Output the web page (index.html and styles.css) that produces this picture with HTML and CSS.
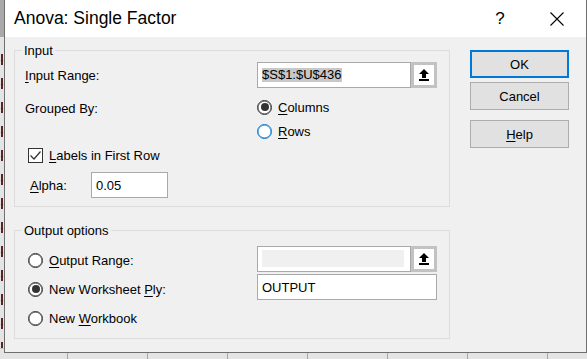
FILE: index.html
```html
<!DOCTYPE html>
<html lang="en">
<head>
    <meta charset="UTF-8">
    <title>Anova: Single Factor</title>
    <link rel="stylesheet" href="styles.css">
</head>
<body>
    <div class="dialog">
        <div class="title-bar">
            <span class="title">Anova: Single Factor</span>
            <div class="title-actions">
                <span class="help-glyph">?</span>
                <svg class="close-glyph" width="14" height="14" viewBox="0 0 14 14">
                    <path d="M0.5 0.5 13.5 13.5 M13.5 0.5 0.5 13.5" stroke="#000" stroke-width="1.1" fill="none"/>
                </svg>
            </div>
        </div>

        <div class="dialog-body">
            <div class="groups">
                <fieldset class="group">
                    <legend>Input</legend>
                    <div class="group-body">
                        <div class="field-row">
                            <span class="field-label"><u>I</u>nput Range:</span>
                            <div class="range-input">
                                <div class="text-box range-box"><span class="selected">$S$1:$U$436</span></div>
                                <div class="pick-btn">
                                    <svg width="10" height="12" viewBox="0 0 10 12">
                                        <path d="M5 0 10 5H7v4H3V5H0z" fill="#000"/>
                                        <rect y="10" width="10" height="2" fill="#000"/>
                                    </svg>
                                </div>
                            </div>
                        </div>

                        <div class="grouped-row">
                            <span class="field-label grouped-label">Grouped By:</span>
                            <div class="radio-list">
                                <div class="radio"><span class="radio-mark checked"></span><span><u>C</u>olumns</span></div>
                                <div class="radio"><span class="radio-mark hover"></span><span><u>R</u>ows</span></div>
                            </div>
                        </div>

                        <div class="check-row">
                            <svg class="check-box" width="15" height="15" viewBox="0 0 15 15">
                                <rect x="0.5" y="0.5" width="14" height="14" fill="#fff" stroke="#333"/>
                                <path d="M2.5 7.5 6 11 12.5 3.5" stroke="#333" stroke-width="1.2" fill="none"/>
                            </svg>
                            <span><u>L</u>abels in First Row</span>
                        </div>

                        <div class="alpha-row">
                            <span class="alpha-label"><u>A</u>lpha:</span>
                            <div class="text-box alpha-box">0.05</div>
                        </div>
                    </div>
                </fieldset>

                <fieldset class="group group-output">
                    <legend>Output options</legend>
                    <div class="output-body">
                        <div class="radio-stack">
                            <div class="radio"><span class="radio-mark"></span><span><u>O</u>utput Range:</span></div>
                            <div class="radio"><span class="radio-mark checked"></span><span>New Worksheet <u>P</u>ly:</span></div>
                            <div class="radio"><span class="radio-mark"></span><span>New <u>W</u>orkbook</span></div>
                        </div>
                        <div class="box-stack">
                            <div class="range-input">
                                <div class="text-box range-box disabled-box"><span class="disabled-fill"></span></div>
                                <div class="pick-btn">
                                    <svg width="10" height="12" viewBox="0 0 10 12">
                                        <path d="M5 0 10 5H7v4H3V5H0z" fill="#000"/>
                                        <rect y="10" width="10" height="2" fill="#000"/>
                                    </svg>
                                </div>
                            </div>
                            <div class="text-box ply-box">OUTPUT</div>
                        </div>
                    </div>
                </fieldset>
            </div>

            <div class="button-column">
                <button class="btn btn-default">OK</button>
                <button class="btn">Cancel</button>
                <button class="btn btn-help"><span><u>H</u>elp</span></button>
            </div>
        </div>
    </div>
</body>
</html>
```

FILE: styles.css
```css
* {
    box-sizing: border-box;
}

html, body {
    margin: 0;
    padding: 0;
}

/* the worksheet peeking out round the dialog */
body {
    width: 587px;
    height: 359px;
    overflow: hidden;
    padding-left: 4px;
    font-family: "Liberation Sans", Arial, sans-serif;
    font-size: 13px;
    color: #000;
    background-color: #e4e4e4;
    background-image:
        linear-gradient(#a9a9a9, #a9a9a9),
        repeating-linear-gradient(to bottom, transparent 0 6px, #5b2326 6px 17px, transparent 17px 24px),
        repeating-linear-gradient(to bottom, transparent 0 23px, #c4c4c4 23px 24px),
        repeating-linear-gradient(to right, transparent 0 67px, #aaaaaa 67px 68px, transparent 68px 80px);
    background-size: 4px 37px, 2px 300px, 4px 100%, 100% 100%;
    background-position: 0 0, 1px 48px, 0 37px, 0 0;
    background-repeat: no-repeat;
}

u {
    text-decoration-thickness: 1px;
    text-underline-offset: 2px;
}

.dialog {
    width: 583px;
    height: 353px;
    background-color: #f0f0f0;
    border: 1px solid #6f6f6f;
    border-top: none;
}

.title-bar {
    height: 37px;
    display: flex;
    align-items: center;
    padding-left: 9px;
    background-color: #fff;
}

.title {
    font-size: 17.5px;
}

.title-actions {
    margin-left: auto;
    display: flex;
    align-items: center;
    padding-right: 22px;
}

.help-glyph {
    width: 14px;
    margin-right: 43px;
    text-align: center;
    font-size: 17px;
}

.dialog-body {
    display: grid;
    grid-template-columns: 436px 99px;
    column-gap: 20px;
    align-items: start;
    padding: 6px 0 0 9px;
}

.group {
    margin: 0;
    padding: 0;
    min-width: 0;
    border: 1px solid #dcdcdc;
}

.group legend {
    margin-left: 7px;
    padding: 0 2px;
    line-height: 15px;
}

.group-output {
    margin-top: 16px;
}

.group-body {
    padding: 4px 0 8px 10px;
}

.field-row {
    display: flex;
    align-items: center;
    height: 26px;
}

.field-label {
    width: 232px;
    flex: none;
}

.range-input {
    display: flex;
    height: 26px;
}

.text-box {
    height: 26px;
    display: flex;
    align-items: center;
    padding-left: 4px;
    background-color: #fff;
    border: 1px solid #a9a9a9;
}

.range-box {
    width: 154px;
}

.selected {
    background-color: #c8c8c8;
    line-height: 14px;
}

.pick-btn {
    width: 26px;
    height: 26px;
    display: flex;
    align-items: center;
    justify-content: center;
    background-color: #fff;
    border: 3px solid #c2c2c2;
}

.grouped-row {
    display: flex;
    margin-top: 9px;
}

.grouped-label {
    line-height: 20px;
    padding-top: 2px;
}

.radio-list {
    display: flex;
    flex-direction: column;
    gap: 4px;
}

.radio {
    display: flex;
    align-items: center;
    gap: 6px;
    height: 20px;
}

.radio-mark {
    width: 15px;
    height: 15px;
    flex: none;
    display: flex;
    align-items: center;
    justify-content: center;
    background-color: #fff;
    border: 1px solid #333;
    border-radius: 50%;
    box-shadow: inset 0 0 0 0.5px #333;
}

.radio-mark.checked::after {
    content: "";
    width: 8px;
    height: 8px;
    border-radius: 50%;
    background-color: #333;
}

.radio-mark.hover {
    border-color: #0078d7;
    box-shadow: inset 0 0 0 0.5px #0078d7;
}

.check-row {
    display: flex;
    align-items: center;
    gap: 6px;
    height: 20px;
    margin: 4px 0 0 3px;
}

.alpha-row {
    display: flex;
    align-items: center;
    height: 26px;
    margin-top: 7px;
    padding-left: 5px;
}

.alpha-label {
    width: 61px;
}

.alpha-box {
    width: 77px;
}

.output-body {
    display: flex;
    padding: 0 0 10px 10px;
}

.radio-stack {
    width: 232px;
    display: flex;
    flex-direction: column;
    gap: 9px;
    padding: 12px 0 0 3px;
}

.box-stack {
    display: flex;
    flex-direction: column;
    gap: 2px;
    padding-top: 8px;
}

.disabled-box {
    padding: 3px 6px 4px 4px;
}

.disabled-fill {
    flex: 1;
    height: 100%;
    background-color: #f0f0f0;
}

.ply-box {
    width: 180px;
}

.button-column {
    display: flex;
    flex-direction: column;
    margin-top: 7px;
}

.btn {
    height: 28px;
    padding: 0;
    font: inherit;
    color: #000;
    background-color: #e1e1e1;
    border: 1px solid #adadad;
}

.btn + .btn {
    margin-top: 4px;
}

.btn-default {
    border: 2px solid #0078d7;
}

.btn.btn-help {
    margin-top: 10px;
}
```
